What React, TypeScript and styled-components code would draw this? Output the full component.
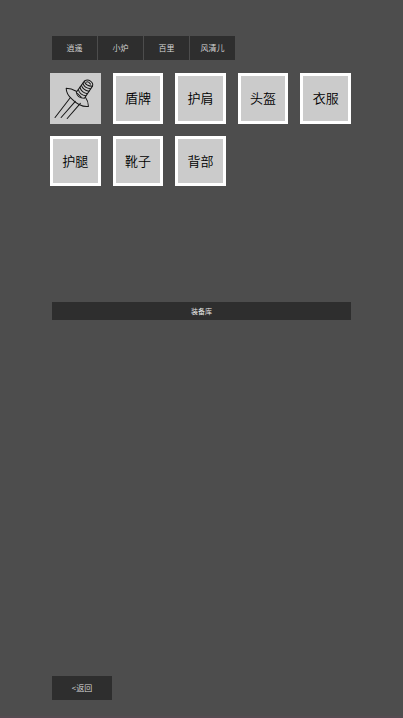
import React, { useState } from "react";
import styled, { createGlobalStyle } from "styled-components";

const GlobalStyle = createGlobalStyle`
  * { box-sizing: border-box; }
  body {
    margin: 0;
    background: #4d4d4d;
    font-family: "Noto Sans CJK SC", "Liberation Sans", sans-serif;
    font-weight: 350;
  }
  button { font-family: inherit; font-weight: inherit; cursor: pointer; }
`;

const Page = styled.main`
  display: flex;
  flex-direction: column;
  min-height: 100vh;
  padding: 36px 52px 16px 50px;
  background: #4d4d4d;
  border-bottom: 2px solid #544b51;
`;

const Tabs = styled.nav`
  display: flex;
  gap: 1px;
  margin-left: 2px;
`;

const DarkButton = styled.button`
  height: 24px;
  padding: 0;
  border: 0;
  background: #2e2e2e;
  color: #dcdcdc;
  font-size: 8px;
  line-height: 24px;
`;

const Tab = styled(DarkButton)`
  width: 45px;
`;

const Slots = styled.section`
  display: grid;
  grid-template-columns: repeat(5, minmax(0, 1fr));
  align-content: start;
  gap: 12px;
  min-height: 242px;
  padding-top: 13px;
`;

const Slot = styled.button<{ $filled: boolean }>`
  display: flex;
  align-items: center;
  justify-content: center;
  aspect-ratio: 1;
  padding: 0;
  border: ${(p) => (p.$filled ? "0" : "3px solid #fff")};
  background: #cbcbcb;
  color: #000;
  font-size: 13px;
  line-height: 20px;
`;

const Sword = styled.svg`
  width: 100%;
  height: 100%;
`;

const Storage = styled.h2`
  margin: 0 0 0 2px;
  background: #2e2e2e;
  color: #ececec;
  font-size: 7px;
  font-weight: inherit;
  line-height: 18px;
  text-align: center;
`;

const Footer = styled.footer`
  margin-top: auto;
  padding-left: 2px;
`;

const BackButton = styled(DarkButton)`
  display: block;
  width: 60px;
`;

function SwordIcon() {
  return (
    <Sword viewBox="0 0 50 50" fill="none" stroke="#161616" strokeWidth="1" strokeLinecap="round" strokeLinejoin="round">
      <path d="M5 44 20 24.500M11 44 25 28M17 45 30 30" />
      <path d="M16 15Q21 15 26 18L35 24Q38 28 38 33Q30 34 22 26Q16 21 16 15Z" />
      <path d="M26 19 34 8Q37 6 40 8Q43 10 42 13L34 25Q27 25 26 19Z" fill="#cbcbcb" />
      <path d="M34 8Q35 13 42 13M32.500 10Q34 15 40 15.500M31 12Q32.500 17 38.500 18M29.500 14Q31 19.500 37 20.500M28 16.500Q29.500 22 35.500 22.500M27 20Q29 22 31 24" />
      <path d="M36 9Q38 8 40 11" />
    </Sword>
  );
}

const characters = ["逍遥", "小炉", "百里", "风清儿"];
const slots = ["武器", "盾牌", "护肩", "头盔", "衣服", "护腿", "靴子", "背部"];

export default function App() {
  const [active, setActive] = useState(0);
  return (
    <>
      <GlobalStyle />
      <Page>
        <Tabs>
          {characters.map((name, i) => (
            <Tab key={name} type="button" aria-pressed={active === i} onClick={() => setActive(i)}>
              {name}
            </Tab>
          ))}
        </Tabs>
        <Slots>
          {slots.map((name, i) => (
            <Slot key={name} type="button" $filled={i === 0} aria-label={name}>
              {i === 0 ? <SwordIcon /> : name}
            </Slot>
          ))}
        </Slots>
        <Storage>装备库</Storage>
        <Footer>
          <BackButton type="button">&lt;返回</BackButton>
        </Footer>
      </Page>
    </>
  );
}
